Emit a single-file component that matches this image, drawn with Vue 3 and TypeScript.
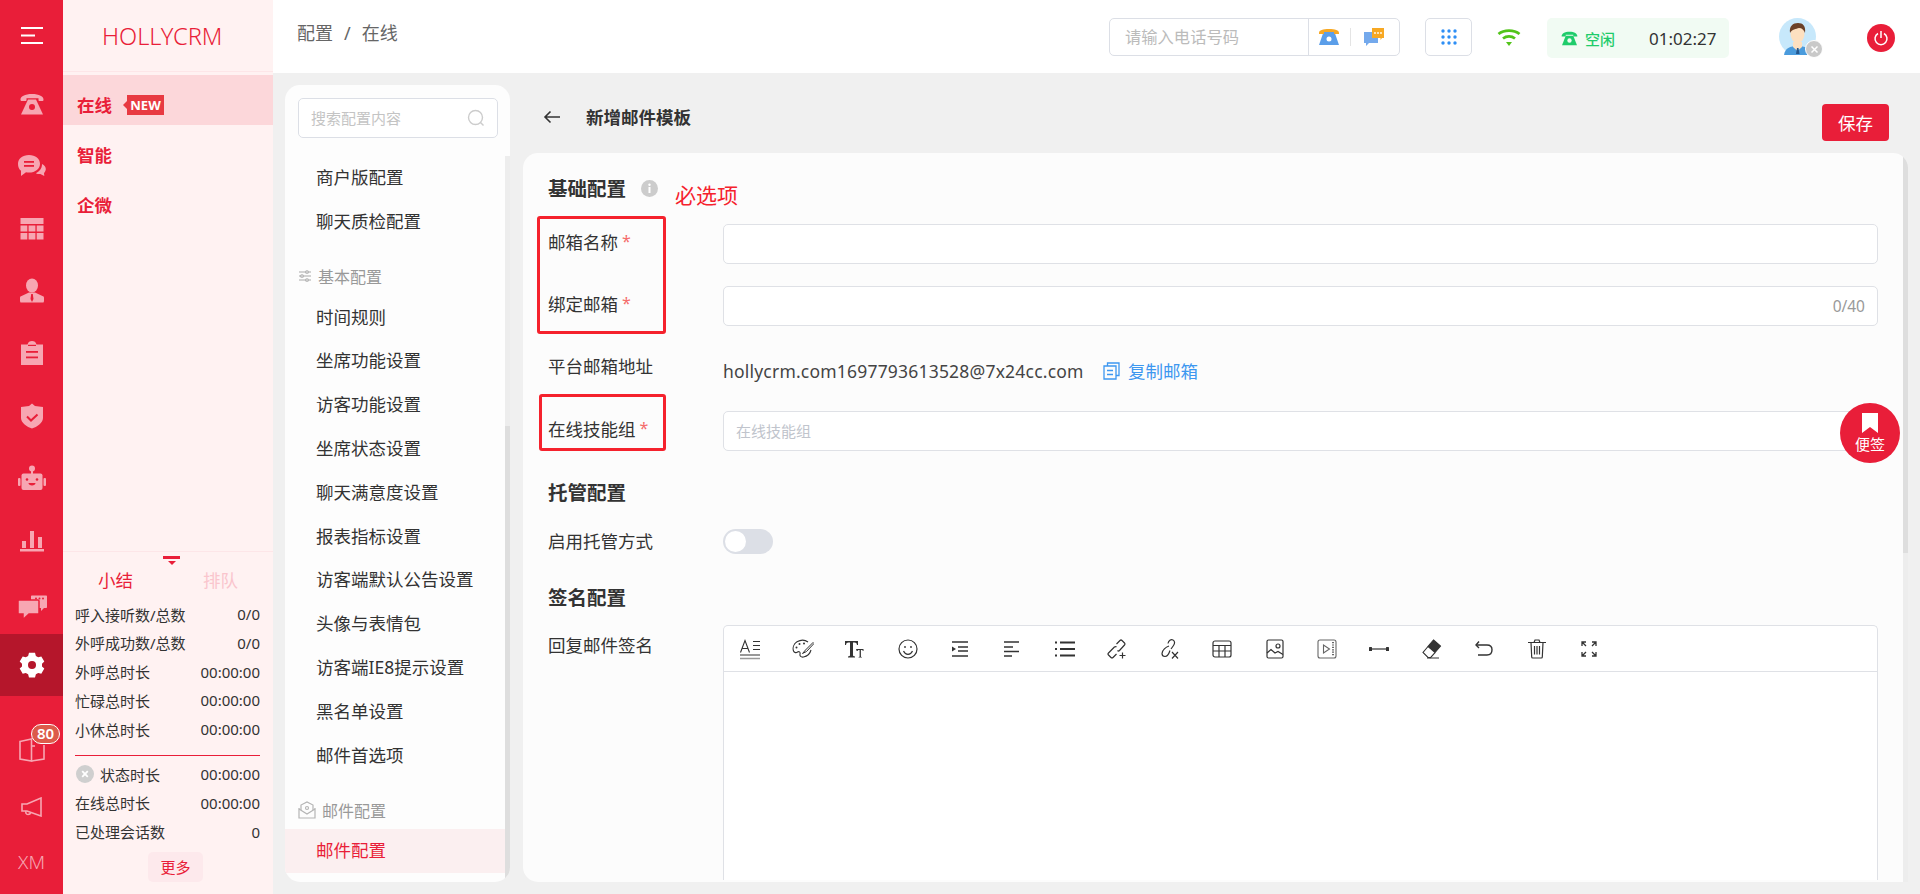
<script setup lang="ts">
interface Stat { label: string; value: string }
const statsTop: Stat[] = [
  { label: '呼入接听数/总数', value: '0/0' },
  { label: '外呼成功数/总数', value: '0/0' },
  { label: '外呼总时长', value: '00:00:00' },
  { label: '忙碌总时长', value: '00:00:00' },
  { label: '小休总时长', value: '00:00:00' },
]
const menuA: string[] = ['商户版配置', '聊天质检配置']
const menuB: string[] = ['时间规则', '坐席功能设置', '访客功能设置', '坐席状态设置', '聊天满意度设置', '报表指标设置', '访客端默认公告设置', '头像与表情包', '访客端IE8提示设置', '黑名单设置', '邮件首选项']
const gridDots: number[][] = [[4, 4], [10, 4], [16, 4], [4, 10], [10, 10], [16, 10], [4, 16], [10, 16], [16, 16]]
</script>

<template>
  <div class="app">
    <aside class="rail">
      <div class="rail-top">
        <svg width="24" height="18" viewBox="0 0 24 18" fill="#fff"><rect x="1" y="0" width="22" height="2"/><rect x="1" y="7.5" width="14" height="2"/><rect x="1" y="15" width="22" height="2"/></svg>
      </div>
      <div class="rail-item">
        <svg width="24" height="24" viewBox="0 0 24 24" fill="currentColor"><path d="M0.5 8C0 4.5 5 2 12 2s12 2.500 11.500 6c-.1.8-.6 1-1.300 1h-2.700c-.7 0-1-.4-1-1V6.300H6.500V8c0 .6-.3 1-1 1H1.800C1.100 9 .6 8.800.5 8z"/><path d="M8 7.500h8L23 22.500H1z"/><circle cx="12" cy="15" r="3" fill="#e91e39"/></svg>
      </div>
      <div class="rail-item">
        <svg width="30" height="24" viewBox="0 0 30 24" fill="currentColor"><path d="M12 1c6.500 0 11 3.700 11 8.700 0 5-4.500 8.800-11 8.800-1 0-2-.1-3-.3L4 22v-5.200C1.900 15.200 1 12.700 1 9.700 1 4.700 5.500 1 12 1z"/><rect x="7" y="7" width="10" height="1.800" fill="#e91e39"/><rect x="7" y="11" width="10" height="1.800" fill="#e91e39"/><path d="M25 10c2.400 1 4 3 3.800 5.300-.1 1.500-.8 2.700-1.800 3.700l.3 3-4-2c-1.500.2-3-.1-4.500-.8 3.500-1.500 6.200-4.600 6.200-9.200z"/></svg>
      </div>
      <div class="rail-item">
        <svg width="24" height="24" viewBox="0 0 24 24" fill="currentColor"><rect x="0.500" y="1" width="23" height="6"/><rect x="0.500" y="8.500" width="6.800" height="6"/><rect x="8.600" y="8.500" width="6.800" height="6"/><rect x="16.700" y="8.500" width="6.800" height="6"/><rect x="0.500" y="16" width="6.800" height="6.500"/><rect x="8.600" y="16" width="6.800" height="6.500"/><rect x="16.700" y="16" width="6.800" height="6.500"/></svg>
      </div>
      <div class="rail-item">
        <svg width="24" height="26" viewBox="0 0 24 26" fill="currentColor"><ellipse cx="12" cy="7.500" rx="6" ry="7"/><path d="M9 14.500h6l8.500 4c1 .8 1 4 0 6H.5c-1-2-1-5.200 0-6z"/><path d="M11.200 16h1.600l.7 5-1.500 3-1.500-3z" fill="#e91e39"/></svg>
      </div>
      <div class="rail-item">
        <svg width="24" height="26" viewBox="0 0 24 26" fill="currentColor"><path d="M1 4.500h6.500C8 2 9.800 1 12 1s4 1 4.500 3.500H23V25H1z"/><rect x="6" y="11" width="12" height="1.800" fill="#e91e39"/><rect x="6" y="16.500" width="12" height="1.800" fill="#e91e39"/><rect x="8" y="4.800" width="8" height="1.200" fill="#e91e39"/></svg>
      </div>
      <div class="rail-item">
        <svg width="24" height="26" viewBox="0 0 24 26" fill="currentColor"><path d="M12 .5 15 3l8 1v11c0 5-6 9-11 10.500C7 24 1 20 1 15V4l8-1z"/><path d="M7 13.500l4 4 6.500-6" fill="none" stroke="#e91e39" stroke-width="2"/></svg>
      </div>
      <div class="rail-item">
        <svg width="28" height="26" viewBox="0 0 28 26" fill="currentColor"><circle cx="14" cy="3.500" r="3"/><rect x="13" y="6" width="2" height="3"/><rect x="3.500" y="8.500" width="21" height="16.500" rx="2"/><rect x="0" y="13" width="2.500" height="8" rx="1"/><rect x="25.500" y="13" width="2.500" height="8" rx="1"/><circle cx="9" cy="14.500" r="1.300" fill="#e91e39"/><circle cx="19" cy="14.500" r="1.300" fill="#e91e39"/><path d="M10.500 18h7c0 1.500-1.500 2.500-3.500 2.500s-3.500-1-3.500-2.500z" fill="#e91e39"/></svg>
      </div>
      <div class="rail-item">
        <svg width="24" height="24" viewBox="0 0 24 24" fill="currentColor"><rect x="2" y="13" width="4" height="7"/><rect x="10" y="3" width="4" height="17"/><rect x="18" y="9" width="4" height="11"/><rect x="0" y="21" width="24" height="2.500"/></svg>
      </div>
      <div class="rail-item rail-chat2">
        <svg width="30" height="25" viewBox="0 0 30 25" fill="currentColor"><path d="M15 .5h14c.6 0 1 .4 1 1V12c0 .6-.4 1-1 1h-2l-3 3v-3h-9c-.6 0-1-.4-1-1V1.500c0-.6.4-1 1-1z"/><path d="M2 5h19c.6 0 1 .4 1 1v12c0 .6-.4 1-1 1H12l-6 5.500V19H2c-.6 0-1-.4-1-1V6c0-.6.4-1 1-1z" stroke="#e91e39" stroke-width="1.500"/><circle cx="19" cy="3.400" r="1" fill="#e91e39"/><circle cx="22.500" cy="3.400" r="1" fill="#e91e39"/><circle cx="26" cy="3.400" r="1" fill="#e91e39"/></svg>
      </div>
      <div class="rail-item rail-active">
        <svg width="26" height="26" viewBox="0 0 26 26" fill="#fff"><path d="M10 .8h6l.9 3.100 2.300 1.300 3.100-.8 3 5.200-2.300 2.200v2.600l2.300 2.200-3 5.200-3.100-.8-2.300 1.300-.9 3.100h-6l-.9-3.100-2.300-1.300-3.100.8-3-5.200 2.300-2.200v-2.600L.7 9.600l3-5.200 3.100.8 2.300-1.300z"/><circle cx="13" cy="13" r="4" fill="#b5162b"/></svg>
      </div>
      <div class="rail-bottom">
        <div class="rail-item-sm">
          <svg width="26" height="24" viewBox="0 0 26 24" fill="none" stroke="currentColor" stroke-width="1.600"><path d="M1 3.500 12.500 1v22L1 21z"/><path d="M12.500 23 25 21V7"/><path d="M12.500 8H16"/></svg>
          <span class="rail-badge">80</span>
        </div>
        <div class="rail-item-sm">
          <svg width="22" height="20" viewBox="0 0 22 20" fill="none" stroke="currentColor" stroke-width="1.600"><path d="M20 1v18L6 14H1V7h5z"/><path d="M5 14c-.5 2 0 3.500 2 3.500s2.500-1 2.800-2"/></svg>
        </div>
        <div class="rail-item-sm rail-xm">XM</div>
      </div>
    </aside>

    <section class="panel">
      <div class="logo">HOLLYCRM</div>
      <nav class="panel-nav">
        <div class="panel-link panel-link-on">在线<span class="new-tag">NEW</span></div>
        <div class="panel-link">智能</div>
        <div class="panel-link">企微</div>
      </nav>
      <div class="stats">
        <div class="stats-handle"><span class="handle-bar"></span><span class="handle-tri"></span></div>
        <div class="stats-tabs"><span class="tab-on">小结</span><span class="tab-off">排队</span></div>
        <div v-for="s in statsTop" :key="s.label" class="stat-row"><span>{{ s.label }}</span><span>{{ s.value }}</span></div>
        <div class="stat-line"></div>
        <div class="stat-row">
          <span class="stat-state"><svg width="18" height="18" viewBox="0 0 18 18"><circle cx="9" cy="9" r="9" fill="#cfcfcf"/><path d="M6.200 6.200l5.600 5.600M11.800 6.200l-5.600 5.600" stroke="#fff" stroke-width="1.800"/></svg>状态时长</span>
          <span>00:00:00</span>
        </div>
        <div class="stat-row"><span>在线总时长</span><span>00:00:00</span></div>
        <div class="stat-row"><span>已处理会话数</span><span>0</span></div>
        <div class="more-btn">更多</div>
      </div>
    </section>

    <div class="right">
      <header class="topbar">
        <div class="crumbs"><span>配置</span><span class="crumb-sep">/</span><span>在线</span></div>
        <div class="tools">
          <div class="dial">
            <span class="dial-text">请输入电话号码</span>
            <span class="dial-icons">
              <svg width="22" height="18" viewBox="0 0 22 18"><path d="M5.500 4h11L21 17H1z" fill="#5b9ee9"/><path d="M1 5C1 2 5 1 11 1s10 1 10 4v1h-5V4H6v2H1z" fill="#f7a823"/><circle cx="11" cy="11" r="2.500" fill="#fff"/></svg>
              <i class="dial-sep"></i>
              <svg width="22" height="20" viewBox="0 0 22 20"><path d="M1 5h14v11H6l-3 3v-3H1z" fill="#74a9ec"/><path d="M9 1h12v10h-2l-1.500 2V11H9z" fill="#f7a823"/><circle cx="12" cy="6" r=".9" fill="#fff"/><circle cx="15" cy="6" r=".9" fill="#fff"/><circle cx="18" cy="6" r=".9" fill="#fff"/></svg>
            </span>
          </div>
          <div class="grid-btn">
            <svg width="20" height="20" viewBox="0 0 20 20" fill="#2e8ff5"><circle v-for="d in gridDots" :key="d.join()" :cx="d[0]" :cy="d[1]" r="1.700"/></svg>
          </div>
          <svg class="wifi" width="24" height="20" viewBox="0 0 24 20" fill="none" stroke="#52c41a" stroke-width="2.800"><path d="M1.500 7C7 2.500 17 2.500 22.500 7"/><path d="M6 11.500c3.500-2.800 8.500-2.800 12 0"/><path d="M9 15h6l-3 4z" fill="#52c41a" stroke="none"/></svg>
          <div class="status">
            <svg width="17" height="15" viewBox="0 0 24 22" fill="#1fcc6b"><path d="M.5 8C0 4 5 1 12 1s12 3 11.500 7h-6V5.500h-11V8z"/><path d="M6.500 7h11L23 21H1z"/><circle cx="12" cy="14" r="3.200" fill="#f1fbf3"/></svg>
            <span class="status-name">空闲</span>
            <span class="status-time">01:02:27</span>
          </div>
          <div class="avatar">
            <svg width="37" height="37" viewBox="0 0 37 37"><circle cx="18.500" cy="18.500" r="18.500" fill="#c7e8fb"/><path d="M5 37c1-7 6-9 13.500-9S31 30 32 37z" fill="#4a9bdc"/><path d="M14 24h9v5l-4.500 4-4.500-4z" fill="#fde0c0"/><ellipse cx="18.500" cy="16" rx="7" ry="9" fill="#fde0c0"/><path d="M11 15c-1-7 3-10 8-10s8 3 7 10c-1-3-3-5-6-5-3 1-7 1-9 5z" fill="#6b4128"/><path d="M18 30h1.500l1 6h-3.500z" fill="#25568c"/></svg>
            <span class="avatar-off"><svg width="9" height="9" viewBox="0 0 9 9"><path d="M1.500 1.500l6 6M7.500 1.500l-6 6" stroke="#fff" stroke-width="1.500"/></svg></span>
          </div>
          <div class="power">
            <svg width="16" height="16" viewBox="0 0 16 16" fill="none" stroke="#fff" stroke-width="1.500"><path d="M5 3.500a6 6 0 1 0 6 0"/><path d="M8 1v7"/></svg>
          </div>
        </div>
      </header>

      <main class="body">
        <div class="cfg">
          <div class="cfg-inner">
            <div class="cfg-search">
              <span class="cfg-ph">搜索配置内容</span>
              <svg width="18" height="18" viewBox="0 0 18 18" fill="none" stroke="#ccc" stroke-width="1.400"><circle cx="8.500" cy="8.500" r="7"/><path d="M13.500 13.500l3 3"/></svg>
            </div>
            <div v-for="m in menuA" :key="m" class="cfg-item">{{ m }}</div>
            <div class="cfg-group cfg-group-a">
              <svg width="14" height="14" viewBox="0 0 14 14" fill="none" stroke="#aaa" stroke-width="1.100"><path d="M1 3h12M1 7h12M1 11h12"/><circle cx="9" cy="3" r="1.300" fill="#fff"/><circle cx="4" cy="7" r="1.300" fill="#fff"/><circle cx="9" cy="11" r="1.300" fill="#fff"/></svg>
              基本配置
            </div>
            <div v-for="m in menuB" :key="m" class="cfg-item">{{ m }}</div>
            <div class="cfg-group cfg-group-b">
              <svg width="18" height="18" viewBox="0 0 18 18" fill="none" stroke="#b5b5b5" stroke-width="1.200"><path d="M1 7v10h16V7"/><path d="M1 8l8 5 8-5"/><path d="M3 9V4l6-3 6 3v5"/><circle cx="9" cy="7" r="1.500"/></svg>
              邮件配置
            </div>
            <div class="cfg-item cfg-item-on">邮件配置</div>
          </div>
          <div class="bar bar-cfg"><span class="thumb thumb-cfg"></span></div>
        </div>

        <div class="content">
          <div class="page-head">
            <svg class="back" width="18" height="14" viewBox="0 0 18 14" fill="none" stroke="#333" stroke-width="1.600"><path d="M17 7H2M7.500 1.500 2 7l5.500 5.500"/></svg>
            <span class="page-title">新增邮件模板</span>
            <button class="save">保存</button>
          </div>
          <div class="card">
            <div class="form">
              <div class="sec sec-1">基础配置
                <svg width="17" height="17" viewBox="0 0 17 17"><circle cx="8.500" cy="8.500" r="8.500" fill="#ccc"/><rect x="7.500" y="7" width="2" height="6" fill="#fff"/><circle cx="8.500" cy="4.800" r="1.200" fill="#fff"/></svg>
              </div>
              <div class="row row-1">
                <label class="lab">邮箱名称<em>*</em></label>
                <div class="inp"></div>
              </div>
              <div class="row row-2">
                <label class="lab">绑定邮箱<em>*</em></label>
                <div class="inp inp-count"><span>0/40</span></div>
              </div>
              <div class="row row-3">
                <label class="lab lab-plain">平台邮箱地址</label>
                <div class="addr">
                  <span class="addr-text">hollycrm.com1697793613528@7x24cc.com</span>
                  <svg width="17" height="18" viewBox="0 0 17 18" fill="none" stroke="#3d97f0" stroke-width="1.300"><path d="M4.500 4V1h11.500v12.500h-3"/><path d="M1 4h12v13H1z"/><path d="M4 8.500h6M4 12.500h6"/></svg>
                  <span class="addr-copy">复制邮箱</span>
                </div>
              </div>
              <div class="row row-4">
                <label class="lab">在线技能组<em>*</em></label>
                <div class="inp inp-ph"><span>在线技能组</span></div>
              </div>
              <div class="sec sec-2">托管配置</div>
              <div class="row row-5">
                <label class="lab">启用托管方式</label>
                <div class="switch"><span class="knob"></span></div>
              </div>
              <div class="sec sec-3">签名配置</div>
              <div class="row row-6">
                <label class="lab lab-top">回复邮件签名</label>
                <div class="editor">
                  <div class="toolbar">
                    <span class="tool"><svg width="22" height="22" viewBox="0 0 22 22" fill="none" stroke="#333" stroke-width="1.100"><path d="M1.500 14.500 6 2.500l4.500 12M3.200 10.500h5.600"/><path d="M14 3.500h7M14 7.500h7M14 11.500h7" stroke-width="1.200"/><path d="M1 17h20" stroke-width="1.200"/><path d="M1 20.500h20" stroke="#999" stroke-width="1.400"/></svg></span>
                    <span class="tool"><svg width="22" height="20" viewBox="0 0 22 20" fill="none" stroke="#333" stroke-width="1.100"><path d="M16 3C13 .8 8.500.8 5 2.800 1.500 5 .5 9 1.500 12c.7 2 3 2 4 1 1.500-1 3 0 2.500 2-.4 2 1 3.500 3.500 3 3.500-.6 6.500-3.200 7.500-7"/><circle cx="4.500" cy="8.500" r="1" fill="#333" stroke="none"/><circle cx="7.500" cy="5" r="1" fill="#333" stroke="none"/><circle cx="12" cy="4.500" r="1" fill="#333" stroke="none"/><path d="M21 3.500 13.500 11l-3 3.500 4-2 7.500-8z" stroke-width="1"/></svg></span>
                    <span class="tool"><svg width="20" height="20" viewBox="0 0 20 20" fill="#333"><path d="M0 2h13v4h-1c-.3-2-1-2.600-2.500-2.600H8V16c0 1 .5 1.400 2 1.500v1H3v-1c1.500-.1 2-.5 2-1.500V3.400H3.500C2 3.400 1.300 4 1 6H0z"/><path d="M12 10h7.500v2h-.6c-.2-.8-.6-1.100-1.400-1.100h-.6v6.300c0 .5.200.7 1 .8v.5h-3.300v-.5c.8-.1 1-.3 1-.8v-6.300h-.6c-.8 0-1.200.3-1.400 1.100H12.700z" transform="translate(-1)"/></svg></span>
                    <span class="tool"><svg width="20" height="20" viewBox="0 0 20 20" fill="none" stroke="#333" stroke-width="1.200"><circle cx="10" cy="10" r="9"/><circle cx="7" cy="8" r=".9" fill="#333" stroke="none"/><circle cx="13" cy="8" r=".9" fill="#333" stroke="none"/><path d="M5.500 12c1 2.300 2.700 3.300 4.500 3.300s3.500-1 4.500-3.300"/></svg></span>
                    <span class="tool"><svg width="18" height="18" viewBox="0 0 18 18" fill="none" stroke="#333" stroke-width="1.400"><path d="M1 2h16M7 7h10M7 11h10M1 16h16"/><path d="M1 6.500 5 9l-4 2.500z" fill="#333" stroke="none"/></svg></span>
                    <span class="tool"><svg width="18" height="18" viewBox="0 0 18 18" fill="none" stroke="#333" stroke-width="1.400"><path d="M1 2h15M1 7h9M1 11.500h15M1 16h8"/></svg></span>
                    <span class="tool"><svg width="20" height="18" viewBox="0 0 20 18" fill="none" stroke="#333" stroke-width="1.800"><path d="M5 2.500h15M5 9h15M5 15.500h15"/><path d="M0 2.500h2M0 9h2M0 15.500h2"/></svg></span>
                    <span class="tool"><svg width="20" height="20" viewBox="0 0 20 20" fill="none" stroke="#333" stroke-width="1.200"><path d="M9.500 5 13 1.500c.6-.6 1.400-.6 2 0l2.500 2.500c.6.6.6 1.400 0 2l-5 5.500c-.6.6-1.400.6-2 0"/><path d="M9.500 8C9 7.500 8 7.500 7.400 8L1.500 14c-.6.6-.6 1.400 0 2L4 18.500c.6.600 1.400.6 2 0L9.500 15"/><path d="M15.500 13.500v6M12.500 16.500h6"/></svg></span>
                    <span class="tool"><svg width="20" height="22" viewBox="0 0 20 22" fill="none" stroke="#333" stroke-width="1.200"><path d="M9 8C6 9 2 12 2 15.500c0 2 1.500 3 3 3 2 0 4-3 5-6"/><path d="M8 5.500C8.500 2.500 11 1 13 2c2 1 2 3.500.5 5.500L11 11"/><path d="M12 14l6 6.500M18 14l-6 6.500"/></svg></span>
                    <span class="tool"><svg width="20" height="18" viewBox="0 0 20 18" fill="none" stroke="#333" stroke-width="1.200"><rect x="1" y="1" width="18" height="16" rx="2"/><path d="M1 5.500h18M1 11h18M7 5.500V17M13 5.500V17"/></svg></span>
                    <span class="tool"><svg width="18" height="20" viewBox="0 0 18 20" fill="none" stroke="#333" stroke-width="1.200"><rect x="1" y="1" width="16" height="18" rx="1.500"/><circle cx="12" cy="7" r="2"/><path d="M1 14l4-3.500 4 3.500 3-1.500 5 3"/></svg></span>
                    <span class="tool"><svg width="20" height="20" viewBox="0 0 20 20" fill="none" stroke="#666" stroke-width="1.100"><rect x="1" y="1" width="18" height="18" rx="2"/><path d="M6.500 6v8l6-4z"/><path d="M16 3v14" stroke-dasharray="1.200 1.200" stroke-width="2"/></svg></span>
                    <span class="tool"><svg width="20" height="4" viewBox="0 0 20 4" fill="#333"><rect x="0" y="0" width="3" height="4" rx=".6"/><rect x="17" y="0" width="3" height="4" rx=".6"/><rect x="2" y="1.400" width="16" height="1.200"/></svg></span>
                    <span class="tool"><svg width="20" height="20" viewBox="0 0 20 20" fill="none" stroke="#333" stroke-width="1.100"><path d="M11.500 1 18.500 7 13 13.500 6 7.500z" fill="#333"/><path d="M6 7.500 1 13.500l5 5 2.500.1 4.500-5"/><path d="M5 19h12" stroke-width="1.200"/></svg></span>
                    <span class="tool"><svg width="18" height="16" viewBox="0 0 18 16" fill="none" stroke="#333" stroke-width="1.400"><path d="M1 4h11c3 0 5 1.800 5 4.800 0 3.200-2 5.200-5 5.200H3"/><path d="M4 .5 1 4l3 3"/></svg></span>
                    <span class="tool"><svg width="18" height="20" viewBox="0 0 18 20" fill="none" stroke="#333" stroke-width="1.200"><path d="M0 3.500h18M6 3.500 7 1h4l1 2.500"/><path d="M3 3.500 3.700 18c0 .7.500 1 1 1h8.600c.5 0 1-.3 1-1L15 3.500"/><path d="M6.500 7v8.500M9 7v8.500M11.500 7v8.500"/></svg></span>
                    <span class="tool"><svg width="16" height="16" viewBox="0 0 16 16" fill="none" stroke="#333" stroke-width="1.300"><path d="M1 5V1h4M1 1l4 4M15 5V1h-4M15 1l-4 4M1 11v4h4M1 15l4-4M15 11v4h-4M15 15l-4-4"/></svg></span>
                  </div>
                </div>
              </div>
              <div class="note-box note-box-a"></div>
              <div class="note-box note-box-b"></div>
              <span class="note-text">必选项</span>
            </div>
            <div class="bar"><span class="thumb thumb-card"></span></div>
          </div>
        </div>
      </main>
    </div>

    <div class="float-note">
      <svg width="18" height="20" viewBox="0 0 18 20" fill="#fff"><path d="M1 0h16v20l-8-6-8 6z"/></svg>
      <span>便签</span>
    </div>
  </div>
</template>

<style>
html, body { margin: 0; padding: 0; background: #f0f0f0; }
</style>

<style scoped>
.app {
  position: relative;
  display: flex;
  width: 1920px;
  height: 894px;
  overflow: hidden;
  background: #f0f0f0;
  color: #333;
  font-family: "Noto Sans", "Noto Sans CJK SC", sans-serif;
  font-size: 17.5px;
}
.rail { width: 63px; flex: none; background: #e91e39; color: #f7a6b2; display: flex; flex-direction: column; }
.rail-top { height: 73px; display: flex; align-items: center; justify-content: center; padding-bottom: 2px; box-sizing: border-box; }
.rail-item { height: 62.33px; flex: none; display: flex; align-items: center; justify-content: center; }
.rail-chat2 { padding-top: 9px; box-sizing: border-box; }
.rail-active { background: #b5162b; }
.rail-bottom { margin-top: auto; padding-bottom: 2px; }
.rail-item-sm { height: 57px; display: flex; align-items: center; justify-content: center; position: relative; }
.rail-xm { font-size: 19px; font-weight: 300; padding-bottom: 3px; box-sizing: border-box; }
.rail-badge {
  position: absolute; left: 31px; top: 3px; width: 29px; height: 20px; box-sizing: border-box;
  border: 1px solid #fff; border-radius: 10px; background: #dc5a4a; color: #fff; font-size: 15px; font-weight: 600;
  line-height: 17px; text-align: center;
}
.panel { width: 210px; flex: none; background: #fff2f2; display: flex; flex-direction: column; }
.logo { height: 72px; box-sizing: border-box; border-bottom: 1px solid #fde6e8; padding-left: 39px; line-height: 72px; color: #e91e39; font-size: 23.6px; font-weight: 300; white-space: nowrap; }
.panel-nav { margin-top: 3px; }
.panel-link { height: 50px; box-sizing: border-box; padding: 9px 0 0 14px; font-weight: 700; color: #e91e39; font-size: 17.5px; display: flex; align-items: center; }
.panel-link-on { background: #fcd7da; }
.new-tag { position: relative; margin-left: 15px; width: 37px; height: 20px; line-height: 20px; text-align: center; background: #e83a42; color: #fff; font-size: 13px; font-weight: 700; }
.new-tag::before { content: ""; position: absolute; left: -4px; top: 6px; border: 4px solid transparent; border-left: 0; border-right-color: #e83a42; }
.stats { margin-top: auto; border-top: 1px solid #fde6e8; padding: 0 13px 12px 12px; font-size: 15px; }
.stats-handle { height: 14px; box-sizing: border-box; margin-left: 88px; width: 17px; padding-top: 4px; display: flex; flex-direction: column; align-items: center; }
.handle-bar { display: block; width: 17px; height: 3px; flex: none; background: #e91e39; }
.handle-tri { display: block; margin-top: 2px; border: 4px solid transparent; border-bottom: 0; border-top-color: #e91e39; }
.stats-tabs { display: flex; margin: 0 -13px 0 -12px; height: 34px; line-height: 28px; font-size: 17.5px; }
.stats-tabs span { flex: 1; text-align: center; }
.tab-on { color: #e91e39; }
.tab-off { color: #fac5cd; }
.stat-row { display: flex; justify-content: space-between; align-items: center; height: 28.8px; white-space: nowrap; }
.stat-state { display: inline-flex; align-items: center; gap: 6px; margin-left: 1px; }
.stat-line { height: 1px; background: #e91e39; margin: 11px 0 4px; }
.more-btn { width: 55px; height: 30px; margin: 6px 0 0 73px; line-height: 30px; text-align: center; border-radius: 5px; background: #fde9ec; color: #e91e39; font-size: 15px; }

.right { flex: 1; min-width: 0; display: flex; flex-direction: column; }
.topbar { height: 73px; flex: none; background: #fff; display: flex; padding-left: 24px; padding-right: 25px; box-sizing: border-box; }
.crumbs { display: flex; gap: 11px; margin-top: 20px; height: 26px; line-height: 26px; color: #666; font-size: 18px; }
.tools { margin-left: auto; display: flex; align-items: flex-start; margin-top: 18px; }
.dial { width: 291px; height: 38px; box-sizing: border-box; border: 1px solid #dcdfe6; border-radius: 5px; display: flex; align-items: center; }
.dial-text { width: 199px; height: 36px; line-height: 36px; padding-left: 15px; box-sizing: border-box; border-right: 1px solid #dcdfe6; color: #bbb; font-size: 16.3px; }
.dial-icons { flex: 1; display: flex; align-items: center; padding-left: 9px; }
.dial-sep { width: 1px; height: 18px; background: #e4e4e4; margin: 0 12px 0 10px; }
.grid-btn { width: 47px; height: 38px; margin-left: 25px; box-sizing: border-box; border: 1px solid #dcdfe6; border-radius: 5px; display: flex; align-items: center; justify-content: center; }
.wifi { margin: 9px 0 0 25px; }
.status { width: 182px; height: 40px; margin-left: 26px; border-radius: 5px; background: #f1fbf3; display: flex; align-items: center; padding-left: 14px; box-sizing: border-box; }
.status-name { margin-left: 7px; color: #1fcc6b; font-size: 15px; font-weight: 500; }
.status-time { margin-left: 34px; color: #333; font-size: 17px; }
.avatar { position: relative; width: 37px; height: 37px; margin-left: 50px; }
.avatar-off { position: absolute; left: 26px; top: 22px; width: 18px; height: 18px; box-sizing: border-box; border: 1px solid #fff; border-radius: 50%; background: #c9c9c9; display: flex; align-items: center; justify-content: center; }
.power { width: 28px; height: 28px; margin: 6px 0 0 51px; border-radius: 50%; background: #e91e39; display: flex; align-items: center; justify-content: center; }

.body { flex: 1; min-height: 0; display: flex; padding: 12px 12px 12px 12px; }
.cfg { width: 225px; flex: none; display: flex; background: #fdfdfd; border-radius: 15px; overflow: hidden; margin-right: 13px; }
.cfg-inner { flex: 1; min-width: 0; }
.cfg-search { margin: 13px 7px 18px 13px; height: 40px; box-sizing: border-box; border: 1px solid #dcdfe6; border-radius: 5px; background: #fff; padding: 0 12px 0 12px; display: flex; align-items: center; justify-content: space-between; color: #c4c4c4; font-size: 15px; }
.cfg-ph { padding-bottom: 2px; }
.cfg-item { height: 43.8px; line-height: 43.8px; padding-left: 31px; white-space: nowrap; }
.cfg-item-on { height: 44px; background: #fbeff0; color: #e91e39; }
.cfg-group { display: flex; align-items: center; color: #999; font-size: 16px; padding-left: 13px; }
.cfg-group-a { height: 40px; box-sizing: border-box; margin-top: 12px; gap: 6px; }
.cfg-group-b { height: 35px; margin-top: 17px; gap: 6px; box-sizing: border-box; padding-bottom: 3px; }
.bar { width: 5px; flex: none; background: #ededed; position: relative; }
.bar-cfg { margin-top: 71px; }
.thumb { display: block; position: absolute; left: 0; width: 5px; background: #dedede; }
.thumb-cfg { top: 270px; bottom: 0; }
.thumb-card { top: 0; height: 400px; }

.content { flex: 1; min-width: 0; display: flex; flex-direction: column; }
.page-head { height: 68px; flex: none; display: flex; align-items: flex-start; position: relative; padding-left: 20px; box-sizing: border-box; }
.back { margin-top: 25px; }
.page-title { margin: 18px 0 0 25px; line-height: 28px; font-weight: 700; font-size: 17.5px; }
.save { margin: 19px 19px 0 auto; width: 67px; height: 37px; border: 0; border-radius: 4px; background: #e91e39; color: #fff; font-family: inherit; font-size: 17.5px; padding: 0; }
.card { flex: 1; min-height: 0; display: flex; background: #fcfcfc; border-radius: 15px 15px 0 15px; overflow: hidden; }
.form { position: relative; flex: 1; min-width: 0; display: flex; flex-direction: column; padding: 20px 25px 2px 25px; }
.sec { height: 30px; box-sizing: border-box; line-height: 30px; font-weight: 700; font-size: 19.5px; display: flex; align-items: center; gap: 15px; flex: none; }
.sec-1 { padding-top: 1px; }
.sec-2 { margin-top: 27px; }
.sec-3 { margin-top: 29px; }
.row { display: flex; align-items: center; flex: none; }
.row-1 { margin-top: 21px; }
.row-2 { margin-top: 22px; }
.row-3 { margin-top: 21px; height: 40px; }
.row-4 { margin-top: 24px; }
.row-5 { margin-top: 21px; height: 25px; }
.row-6 { margin-top: 12px; flex: 1; min-height: 0; align-items: flex-start; }
.lab { width: 175px; flex: none; padding-bottom: 5px; box-sizing: border-box; white-space: nowrap; }
.lab em { color: #f56c6c; font-style: normal; margin-left: 4px; font-size: 16px; vertical-align: 2px; }
.lab-plain { padding-bottom: 3px; }
.row-5 .lab { padding-bottom: 2px; }
.lab-top { padding: 7px 0 0; }
.inp { flex: 1; height: 40px; box-sizing: border-box; border: 1px solid #dfe1e6; border-radius: 5px; background: #fff; display: flex; align-items: center; }
.inp-count { justify-content: flex-end; padding-right: 12px; color: #999; font-size: 15.5px; }
.inp-ph { padding: 0 0 2px 12px; color: #c0c4cc; font-size: 15px; }
.addr { display: flex; align-items: center; padding-top: 7px; box-sizing: border-box; height: 40px; }
.addr-text { width: 380px; white-space: nowrap; font-size: 17.5px; letter-spacing: .2px; color: #444; }
.addr-copy { margin-left: 8px; color: #3d97f0; }
.switch { width: 50px; height: 25px; border-radius: 13px; background: #dcdfe6; position: relative; }
.knob { position: absolute; left: 2px; top: 2px; width: 21px; height: 21px; border-radius: 50%; background: #fff; }
.editor { flex: 1; align-self: stretch; box-sizing: border-box; border: 1px solid #dfe1e6; border-bottom: 0; border-radius: 5px 5px 0 0; background: #fff; overflow: hidden; }
.toolbar { height: 46px; box-sizing: border-box; border-bottom: 1px solid #dfe1e6; display: flex; align-items: center; }
.tool { width: 52.45px; flex: none; display: flex; align-items: center; justify-content: center; }
.note-box { position: absolute; box-sizing: border-box; border: 3px solid #f5222d; border-radius: 3px; }
.note-box-a { left: 14px; top: 63px; width: 129px; height: 118px; }
.note-box-b { left: 16px; top: 241px; width: 127px; height: 57px; }
.note-text { position: absolute; left: 152px; top: 27px; color: #f5222d; font-size: 21px; line-height: 30px; }
.float-note { position: absolute; left: 1840px; top: 403px; width: 60px; height: 60px; box-sizing: border-box; padding-top: 10px; border-radius: 50%; background: #e91e39; color: #fff; font-size: 15px; display: flex; flex-direction: column; align-items: center; line-height: 22px; }
</style>
